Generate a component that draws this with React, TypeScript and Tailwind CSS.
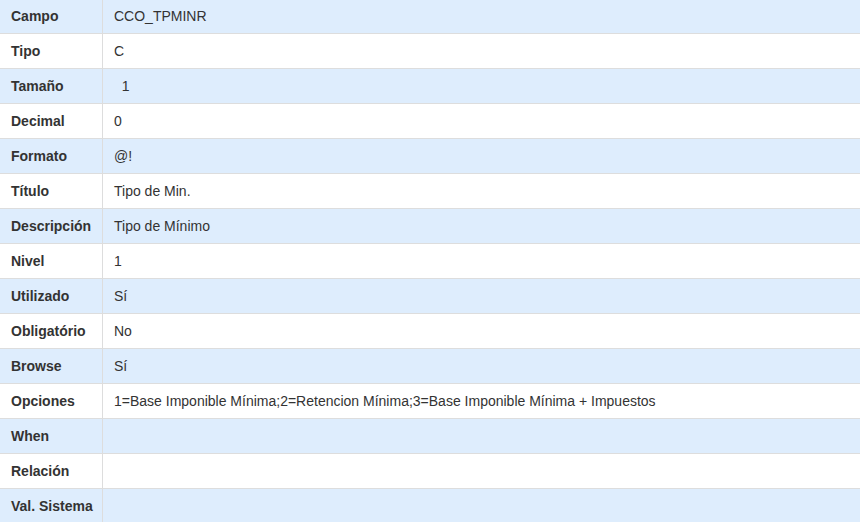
import React from "react";

interface Row {
  label: string;
  value: string;
}

const rows: Row[] = [
  { label: "Campo", value: "CCO_TPMINR" },
  { label: "Tipo", value: "C" },
  { label: "Tamaño", value: "  1" },
  { label: "Decimal", value: "0" },
  { label: "Formato", value: "@!" },
  { label: "Título", value: "Tipo de Min." },
  { label: "Descripción", value: "Tipo de Mínimo" },
  { label: "Nivel", value: "1" },
  { label: "Utilizado", value: "Sí" },
  { label: "Obligatório", value: "No" },
  { label: "Browse", value: "Sí" },
  {
    label: "Opciones",
    value:
      "1=Base Imponible Mínima;2=Retencion Mínima;3=Base Imponible Mínima + Impuestos",
  },
  { label: "When", value: "" },
  { label: "Relación", value: "" },
  { label: "Val. Sistema", value: "" },
];

const App = () => {
  return (
    <div className="w-[860px] h-[522px] overflow-hidden bg-white font-['Liberation_Sans',Arial,sans-serif] text-[14px] text-[#333333]">
      <div className="flex flex-col">
        {rows.map((row, index) => (
          <div
            key={row.label}
            className={`flex border-b border-[#dddddd] ${
              index === 0 ? "h-[34px]" : "h-[35px]"
            } ${index % 2 === 0 ? "bg-[#deedfd]" : "bg-white"}`}
          >
            {/* LABEL */}
            <div className="w-[103px] shrink-0 flex items-center pl-[11px] border-r border-[#dddddd] font-bold">
              {row.label}
            </div>

            {/* VALUE */}
            <div className="flex-1 flex items-center pl-[11px] whitespace-pre">
              {row.value}
            </div>
          </div>
        ))}
      </div>
    </div>
  );
};

export default App;
